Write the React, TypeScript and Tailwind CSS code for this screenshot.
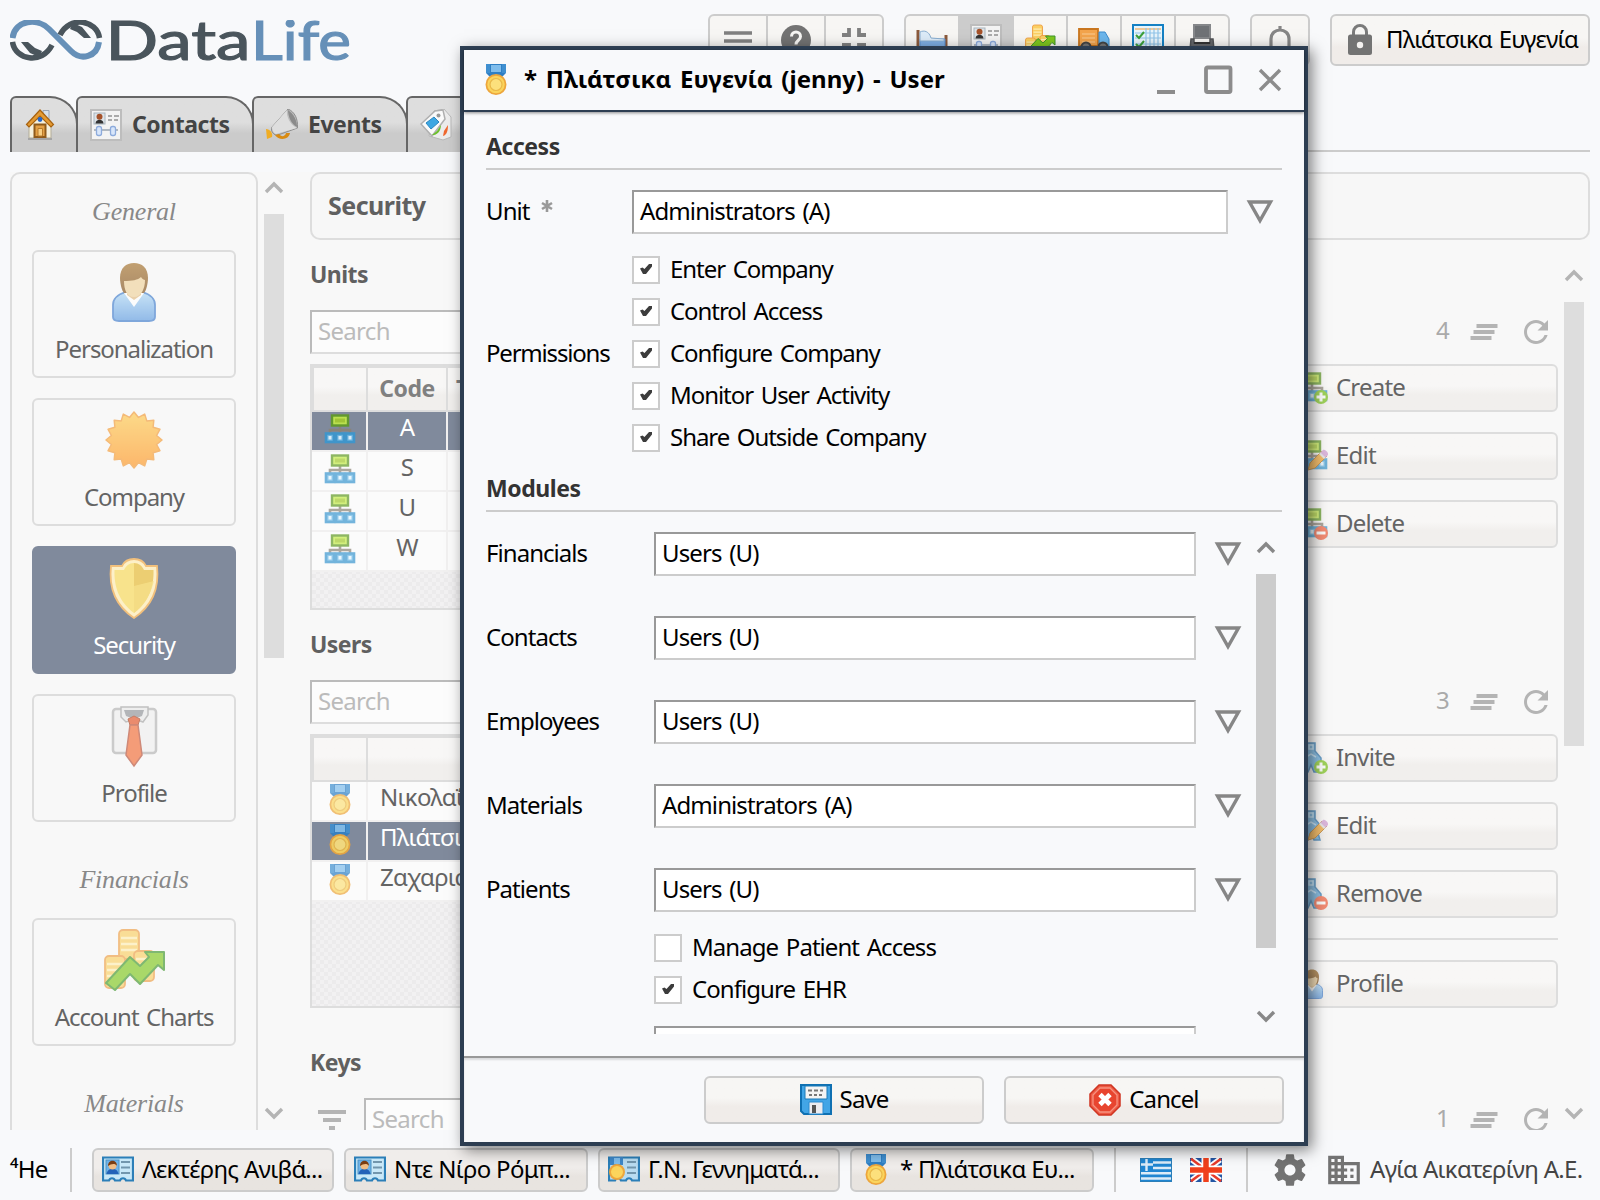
import React from "react";

type P = { className?: string };

const Svg = ({ className = "size-8", box = "0 0 32 32", children }: { className?: string; box?: string; children: React.ReactNode }) => (
  <svg viewBox={box} className={`shrink-0 ${className}`} fill="none">
    {children}
  </svg>
);

/* ---------- icons ---------- */
const Medal = ({ className }: P) => (
  <Svg className={className}>
    <path d="M6 0h20v9l-4 4H10l-4-4z" fill="#2f7fc4" />
    <path d="M11 1h10v7H11z" fill="#7fbdec" />
    <path d="M6 0h4v9H6zM22 0h4v9h-4z" fill="#3f8fd0" />
    <circle cx="16" cy="20.500" r="9.600" fill="#fbd45c" stroke="#eda63c" strokeWidth="1.800" />
    <circle cx="16" cy="20.500" r="6" fill="#fce07c" stroke="#e9b84a" strokeWidth="1.200" />
  </Svg>
);

const Org = ({ className, badge }: P & { badge?: "plus" | "minus" | "pencil" }) => (
  <Svg className={className}>
    <path d="M16 12v8M6 20v-4h20v4" stroke="#8c8478" strokeWidth="2.600" />
    <rect x="8" y="1.500" width="16" height="10" fill="#c2ea48" stroke="#5f9a24" strokeWidth="2.400" />
    <rect x="11" y="4.500" width="10" height="4" fill="#a4cc2c" />
    {[2, 12, 22].map((x) => (
      <g key={x}>
        <rect x={x} y="19.500" width="8" height="8.500" fill="#6cb9e6" stroke="#3a97cf" strokeWidth="2.600" />
        <rect x={x + 2.500} y="22" width="3" height="3.500" fill="#e4f6ff" />
      </g>
    ))}
    <Badge kind={badge} />
  </Svg>
);

const Badge = ({ kind }: { kind?: "plus" | "minus" | "pencil" }) => {
  if (kind === "plus")
    return (
      <g>
        <circle cx="25" cy="25" r="7" fill="#7cc41c" />
        <path d="M25 20.500v9M20.500 25h9" stroke="#fff" strokeWidth="3" />
      </g>
    );
  if (kind === "minus")
    return (
      <g>
        <circle cx="25" cy="25" r="7" fill="#f2603f" />
        <path d="M20.500 25h9" stroke="#fff" strokeWidth="3" />
      </g>
    );
  if (kind === "pencil")
    return (
      <g>
        <path d="M12 30l2-7L26 11l5 5-12 12z" fill="#f0a634" stroke="#b9761c" />
        <path d="M24 13l5 5 3-3c1-2-3-6-5-5z" fill="#cf9bd0" />
        <path d="M23 14l5 5 1.500-1.500-5-5z" fill="#ddd" />
      </g>
    );
  return null;
};

const UserBadge = ({ badge }: { badge: "plus" | "minus" | "pencil" }) => (
  <Svg>
    <path d="M11 1h8v8l6 7v5l-3 2 2 7h-6l-3-7-3 7H6l2-8-3-2v-5l6-6z" fill="#5fa8da" stroke="#2f79b3" strokeWidth="1.500" />
    <path d="M13 3h4v4h-4zM10 15l5-3 5 3" stroke="#b5dcf5" strokeWidth="1.500" />
    <Badge kind={badge} />
  </Svg>
);

const Person = ({ className }: P) => (
  <Svg className={className} box="0 0 64 64">
    <defs>
      <linearGradient id="shirt" x1="0" y1="0" x2="0" y2="1">
        <stop offset="0" stopColor="#aed8f6" />
        <stop offset="1" stopColor="#5c9ae0" />
      </linearGradient>
      <linearGradient id="hair" x1="0" y1="0" x2="0" y2="1">
        <stop offset="0" stopColor="#a5712a" />
        <stop offset="1" stopColor="#80501a" />
      </linearGradient>
    </defs>
    <path d="M11 57V45c0-8 6-11 13-13h16c7 2 13 5 13 13v12c0 3-3 4-6 4H17c-3 0-6-1-6-4z" fill="url(#shirt)" stroke="#3f7ccc" strokeWidth="1.800" />
    <path d="M22 33l10 14 10-14z" fill="#fff" />
    <path d="M25 28h14v7l-7 5-7-5z" fill="#e2bc82" />
    <path d="M18 18C18 8 24 3 32 3s14 5 14 15c0 6-2 13-4 15H22c-2-2-4-9-4-15z" fill="url(#hair)" />
    <path d="M22 21c8 0 14-1 17-4 1 2 3 3 4 3 0 9-4 17-11 17s-10-7-10-16z" fill="#f0d29c" />
  </Svg>
);

const burst = Array.from({ length: 32 }, (_, i) => {
  const a = (i * Math.PI) / 16;
  const r = i % 2 ? 23 : 28;
  return `${(32 + r * Math.sin(a)).toFixed(1)},${(32 - r * Math.cos(a)).toFixed(1)}`;
}).join(" ");

const Burst = ({ className }: P) => (
  <Svg className={className} box="0 0 64 64">
    <defs>
      <linearGradient id="sun" x1="0" y1="0" x2="0" y2="1">
        <stop offset="0" stopColor="#ffcb4f" />
        <stop offset="1" stopColor="#ff9420" />
      </linearGradient>
    </defs>
    <polygon points={burst} fill="url(#sun)" stroke="#f39a35" strokeWidth="1.500" strokeLinejoin="round" />
  </Svg>
);

const Shield = ({ className }: P) => (
  <Svg className={className} box="0 0 64 64">
    <path d="M32 3c6 0 10 3 12 7h11c2 18-2 38-23 52C11 48 7 28 9 10h11c2-4 6-7 12-7z" fill="#fdf0c8" stroke="#f2c07c" strokeWidth="1.800" />
    <path d="M32 7v50C16 45 12 29 12.500 14H22c2-4 5-7 10-7z" fill="#f8e38c" />
    <path d="M32 7v50c16-12 20-28 19.500-43H42c-2-4-5-7-10-7z" fill="#ecce72" />
    <path d="M52 25C48 40 42 50 32 57V30z" fill="#f8e38c" opacity=".7" />
  </Svg>
);

const Shirt = ({ className }: P) => (
  <Svg className={className} box="0 0 64 64">
    <rect x="11" y="5" width="43" height="44" rx="3" fill="#f0f0f0" stroke="#b4b4b4" strokeWidth="2.500" />
    <path d="M19 3h27v8l-5 7-8-3-9 3-5-5z" fill="#e9e9e9" stroke="#a4a4a4" strokeWidth="1.500" />
    <path d="M22 6h20l-2 6-8 3-8-3z" fill="#8f9297" />
    <path d="M26 15l6-3 6 3-2 6h-8z" fill="#e45223" stroke="#a83c18" />
    <path d="M28 21h8l4 30-8 11-8-11z" fill="#f26b35" stroke="#b84f35" strokeWidth="1.500" />
  </Svg>
);

const Charts = ({ className }: P) => (
  <Svg className={className} box="0 0 64 64">
    {[
      [17, 2, 29],
      [3, 28, 32],
      [32, 23, 30],
    ].map(([x, y, h]) => (
      <g key={x}>
        <rect x={x} y={y} width="20" height={h} rx="4" fill="#fbcf63" stroke="#ee9f45" strokeWidth="1.800" />
        <path d={`M${x + 2} ${y + 8}h16M${x + 2} ${y + 14}h16M${x + 2} ${y + 20}h16`} stroke="#ffeeb2" strokeWidth="2.500" />
      </g>
    ))}
    <path d="M4 55l24-26 10 9 9-9-4-5h19v18l-6-5-18 19-10-10-15 16z" fill="#7fc81e" stroke="#3f962c" strokeWidth="2" strokeLinejoin="round" />
  </Svg>
);

const Card = ({ className, gray }: P & { gray?: boolean }) => (
  <Svg className={className}>
    {gray ? (
      <>
        <rect x="1" y="1" width="30" height="30" fill="#f3f3f3" stroke="#bdbdbd" strokeWidth="2" />
        <rect x="4" y="4" width="11" height="11" fill="#dde3e8" stroke="#a9b5bd" />
        <path d="M5.500 14.500c0-5 8-5 8 0z" fill="#333" />
        <circle cx="9.500" cy="7.800" r="3" fill="#a5522a" />
        <path d="M18 7h4m2 0h5M18 11h4m2 0h4" stroke="#aaa" strokeWidth="1.800" />
        <path d="M4 21h24" stroke="#9aa4b0" strokeWidth="1.500" />
        <rect x="6.500" y="17.500" width="5" height="9" rx="2" fill="#d8e6fa" stroke="#8dabdc" strokeWidth="1.300" />
        <rect x="20.500" y="17.500" width="5" height="9" rx="2" fill="#d8e6fa" stroke="#8dabdc" strokeWidth="1.300" />
      </>
    ) : (
      <>
        <path d="M1 3.500h30v23h-7c-1-3-5-3-6 0h-5c-1-3-5-3-6 0H1z" fill="#c9e8f8" stroke="#2c7fb8" strokeWidth="2.200" />
        <rect x="4" y="6" width="13" height="14" fill="#6fb3e8" stroke="#4d92c4" />
        <path d="M4.500 20c1-7 11-7 12 0z" fill="#2362b8" />
        <circle cx="10.500" cy="11.500" r="4" fill="#f0bd84" />
        <path d="M6 12c0-7 9-7 9 0-2-3-6-2-9 0z" fill="#7a3d12" />
        <path d="M19 8h9M19 13.500h9M19 19h9" stroke="#7296ad" strokeWidth="2" />
      </>
    )}
  </Svg>
);

const MedalCard = () => (
  <Svg>
    <path d="M1 3.500h30v23h-7c-1-3-5-3-6 0h-5c-1-3-5-3-6 0H1z" fill="#b9dcf1" stroke="#2c7fb8" strokeWidth="2.200" />
    <path d="M2 3h13v8H2z" fill="#3d87c8" />
    <path d="M6 4h6v6H6z" fill="#7fbdec" />
    <path d="M19 8h9M19 13.500h9M19 19h9" stroke="#7296ad" strokeWidth="2" />
    <circle cx="9" cy="18" r="7" fill="#fbd45c" stroke="#eda63c" strokeWidth="2" />
  </Svg>
);

const House = () => (
  <Svg>
    <path d="M19 1.500h6v9h-6z" fill="#d7e0ea" stroke="#98a4b4" />
    <path d="M5 15L16 4l11 11v14H5z" fill="#f5f0dd" stroke="#b3ad99" />
    <path d="M2.500 15.500L16 1l13.500 14.500L27 18 16 7 5 18z" fill="#e39a34" stroke="#a8620f" strokeWidth="1.200" />
    <path d="M10.500 28V15.500h11V28z" fill="#e3a046" stroke="#8f5a1a" strokeWidth="2" />
    <path d="M14 27v-7.500h4.500V27z" fill="#f8cf83" stroke="#b87a2a" />
    <circle cx="16" cy="10.500" r="2.400" fill="#2565c8" />
    <path d="M4 30h24" stroke="#a5a5a5" strokeWidth="2" />
  </Svg>
);

const Horn = () => (
  <Svg>
    <path d="M22 0c7 3 10 10 9.500 19L12 26c-4 1-8-4-6-8z" fill="#bdbdbd" stroke="#8e8e8e" />
    <path d="M21 1c-1 6 3 15 10 18L10 25c-3-1-4-5-4-7z" fill="#dedede" />
    <path d="M22 1c6 4 9 11 9 17-6-3-9-11-9-17z" fill="#8b8b8b" />
    <path d="M0 20c4 0 7 4 6 8l-5 2z" fill="#f0ad24" />
    <path d="M9 26c4 6 14 5 15-2h-4c-1 4-5 4-7 1z" fill="#d98b12" />
  </Svg>
);

const Tags = () => (
  <Svg>
    <path d="M14 2l10-2 7 8v20l-8 3-14-4z" fill="#ececec" stroke="#b8b8b8" />
    <path d="M1 15L15 2l8-1 2 9-13 17z" fill="#fafafa" stroke="#b0b0b0" strokeWidth="1.500" />
    <circle cx="18.500" cy="6.500" r="2" fill="#999" />
    <path d="M6 14l8-6 5 5-8 7z" fill="#3ea7e2" stroke="#2c87c0" />
    <path d="M14 26c5-1 7-6 7-10l-4 6-5 4z" fill="#6cc02c" />
    <path d="M23 27c4-1 5-6 5-11l-4 6z" fill="#f0682f" />
  </Svg>
);

const Bed = () => (
  <Svg>
    <path d="M2 6v24M30 11v19" stroke="#8b5a3c" strokeWidth="3" />
    <path d="M4 15h25v8H4z" fill="#7fb0e6" stroke="#5a8fcf" />
    <path d="M4 8c4-2 9-1 11 6l13 1v2H4z" fill="#dcebf8" stroke="#8aaed0" />
    <path d="M4 23h25v3H4z" fill="#a66b47" />
  </Svg>
);

const Truck = () => (
  <Svg>
    <path d="M1 5h19v17H1z" fill="#f3a44c" stroke="#c9761e" strokeWidth="1.800" />
    <path d="M4 10h13M4 14h13M4 18h13" stroke="#f9cc93" />
    <path d="M21 8h6l4 7v8H21z" fill="#6cb6ec" stroke="#3b8acb" />
    <circle cx="8" cy="23" r="4.500" fill="#777" stroke="#444" strokeWidth="2" />
    <circle cx="25" cy="23" r="4.500" fill="#777" stroke="#444" strokeWidth="2" />
  </Svg>
);

const Planner = () => (
  <Svg>
    <rect x="1" y="1" width="30" height="30" fill="#e8f5fc" stroke="#1581c4" strokeWidth="2" />
    <path d="M3 5h26" stroke="#f0c48e" strokeWidth="1.800" />
    <path d="M14 4v26M18 4v26M22 4v26M26 4v26M3 9h26M3 14h26M3 20h26" stroke="#8fc4e8" strokeWidth="1.200" />
    <path d="M4 11l3 3 5-6M4 20l3 3 5-6" stroke="#3da03a" strokeWidth="2" />
  </Svg>
);

const Printer = () => (
  <Svg>
    <path d="M8 1h16v13H8z" fill="#6f7276" stroke="#85878a" strokeWidth="2" />
    <path d="M5 15h3v4h16v-4h3l1 11H4z" fill="#66686c" stroke="#515356" strokeWidth="1.500" />
    <path d="M8 19h16" stroke="#333" strokeWidth="2" />
  </Svg>
);

const Floppy = () => (
  <Svg>
    <path d="M1 1h30v29H4l-3-3z" fill="#42a5e6" stroke="#0f70b2" strokeWidth="2" />
    <path d="M5 2h22v13H5z" fill="#f4f4f4" stroke="#1b7ab8" />
    <path d="M8 6.500h4m2 0h4m2 0h3M9 11h3m2 0h3m2 0h3" stroke="#777" strokeWidth="2" />
    <path d="M9 18h14v12H9z" fill="#ececf0" stroke="#2b8bd0" />
    <path d="M12 21h4v8h-4z" fill="#555" />
  </Svg>
);

const Stop = () => (
  <Svg>
    <path d="M10 1h12l9 9v12l-9 9H10l-9-9V10z" fill="#ee5a44" stroke="#cf3522" strokeWidth="1.500" />
    <path d="M11 4h10l7 7v10l-7 7H11l-7-7V11z" fill="#e8452f" stroke="#f69280" strokeWidth="1.300" />
    <path d="M11 10.500l10 10M21 10.500l-10 10" stroke="#fff" strokeWidth="4.800" />
  </Svg>
);

const Greece = () => (
  <Svg box="0 0 32 28" className="h-7 w-8">
    <path d="M0 2h32v24H0z" fill="#1f86d2" />
    <path d="M12 6.500h20M12 12h20M0 17.300h32M0 22.500h32" stroke="#dcecf8" strokeWidth="2.400" />
    <path d="M0 2h13v13H0z" fill="#1f86d2" />
    <path d="M6.500 2v13M0 8.500h13" stroke="#dcecf8" strokeWidth="2.400" />
    <path d="M.5 2.500h31v23H.5z" stroke="#2d7fb8" />
  </Svg>
);

const Britain = () => (
  <Svg box="0 0 32 28" className="h-7 w-8">
    <path d="M0 2h32v24H0z" fill="#2356a4" />
    <g stroke="#fff" strokeWidth="6">
      <path d="M2 3.500l28 21M30 3.500l-28 21" />
    </g>
    <g stroke="#e63a2a" strokeWidth="2.500">
      <path d="M1 2.800l30 22.400M31 2.800l-30 22.400" />
    </g>
    <path d="M16 2v24M0 14h32" stroke="#fff" strokeWidth="9" />
    <path d="M16 2v24M0 14h32" stroke="#f0401c" strokeWidth="5.500" />
  </Svg>
);

const Gear = () => (
  <Svg className="size-[38px]" box="0 0 24 24">
    <path
      fill="#737373"
      d="M19.430 12.980c.04-.32.07-.64.07-.98s-.03-.66-.07-.98l2.110-1.650c.19-.15.24-.42.12-.64l-2-3.460c-.12-.22-.39-.3-.61-.22l-2.490 1c-.52-.4-1.080-.73-1.690-.98l-.38-2.650C14.460 2.180 14.250 2 14 2h-4c-.25 0-.46.18-.49.42l-.38 2.650c-.61.25-1.170.59-1.690.98l-2.490-1c-.23-.09-.49 0-.61.22l-2 3.460c-.13.22-.07.49.12.64l2.110 1.650c-.04.32-.07.65-.07.98s.03.66.07.98l-2.110 1.650c-.19.15-.24.42-.12.64l2 3.460c.12.22.39.3.61.22l2.490-1c.52.4 1.080.73 1.690.98l.38 2.650c.03.24.24.42.49.42h4c.25 0 .46-.18.49-.42l.38-2.650c.61-.25 1.170-.59 1.690-.98l2.490 1c.23.09.49 0 .61-.22l2-3.460c.12-.22.07-.49-.12-.64l-2.110-1.650zM12 15.500c-1.930 0-3.500-1.570-3.500-3.500s1.570-3.500 3.500-3.500 3.500 1.570 3.500 3.500-1.570 3.500-3.500 3.500z"
    />
  </Svg>
);

const Building = () => (
  <Svg className="size-[38px]" box="0 0 24 24">
    <path
      fill="#737373"
      d="M12 7V3H2v18h20V7H12zM6 19H4v-2h2v2zm0-4H4v-2h2v2zm0-4H4V9h2v2zm0-4H4V5h2v2zm4 12H8v-2h2v2zm0-4H8v-2h2v2zm0-4H8V9h2v2zm0-4H8V5h2v2zm10 12h-8v-2h2v-2h-2v-2h2v-2h-2V9h8v10zm-2-8h-2v2h2v-2zm0 4h-2v2h2v-2z"
    />
  </Svg>
);

const Padlock = () => (
  <Svg>
    <path d="M9.500 12V8a6.500 6.500 0 0113 0v4" stroke="#7a7a7a" strokeWidth="3" />
    <rect x="4" y="10.500" width="24" height="20.500" rx="2.500" fill="#737373" />
    <circle cx="16" cy="21" r="3.200" fill="#f4f2f0" />
  </Svg>
);

const Chevron = ({ down, dark, className }: P & { down?: boolean; dark?: boolean }) => (
  <Svg box="0 0 20 20" className={`size-5 ${className}`}>
    <path d={down ? "M2 6l8 8 8-8" : "M2 14l8-8 8 8"} stroke={dark ? "#888" : "#b4b4b4"} strokeWidth="3.400" />
  </Svg>
);

const Triangle = () => (
  <Svg box="0 0 28 26" className="h-[26px] w-7">
    <path d="M3.500 3h21L14 21.500z" stroke="#868686" strokeWidth="3.400" />
  </Svg>
);

const Lines = () => (
  <Svg box="0 0 28 20" className="h-5 w-7">
    <path d="M6.500 4h21M3.500 10h21M.5 16h21" stroke="#b4b4b4" strokeWidth="3.800" />
  </Svg>
);

const Refresh = () => (
  <Svg box="4 4 16 16" className="size-6">
    <path
      fill="#b4b4b4"
      d="M17.650 6.350C16.200 4.900 14.210 4 12 4c-4.420 0-7.990 3.580-7.990 8s3.570 8 7.990 8c3.730 0 6.840-2.550 7.730-6h-2.080c-.82 2.330-3.040 4-5.650 4-3.310 0-6-2.690-6-6s2.690-6 6-6c1.660 0 3.140.69 4.220 1.780L13 11h7V4l-2.350 2.350z"
    />
  </Svg>
);

/* ---------- pieces ---------- */
const Hand = () => (
  <>
    <path d="M2.500 22C5 40 32 45 42 25" fill="none" stroke="#4a555c" strokeWidth="5.500" />
    <path d="M11 22h7l7 6 7 3-3 6-9-4z" fill="#4a555c" />
  </>
);

const Logo = () => (
  <svg viewBox="0 0 340 44" className="h-11 w-[340px]">
    <path d="M2.500 18C5-1 28-2 39 9l22 22c10 10 26 6 28-9" fill="none" stroke="#6690b8" strokeWidth="6" />
    <Hand />
    <g transform="rotate(180 46 20)">
      <Hand />
    </g>
    <g fontFamily="Lato" fontSize="55" strokeWidth="1.200" letterSpacing="0" wordSpacing="0">
      <text x="95.500" y="39.500" textLength="145" lengthAdjust="spacingAndGlyphs" fill="#4a555c" stroke="#4a555c">
        Data
      </text>
      <text x="241" y="39.500" textLength="100" lengthAdjust="spacingAndGlyphs" fill="#6690b8" stroke="#6690b8">
        Life
      </text>
    </g>
  </svg>
);

const Tab = ({ icon, label, className = "" }: { icon: React.ReactNode; label?: string; className?: string }) => (
  <div
    className={`-mr-0.5 flex h-14 shrink-0 items-center gap-2.5 rounded-tl-md rounded-tr-[28px] border-2 border-b-0 border-[#666] bg-linear-to-b from-[#dedede] from-45% to-[#cbcbcb] to-65% pl-3 ${className}`}
  >
    {icon}
    {label && <span className="pb-0.5 text-[23px] font-bold tracking-[-0.45px] text-[#444]">{label}</span>}
  </div>
);

const ToolCell = ({ children, className = "" }: { children: React.ReactNode; className?: string }) => (
  <div className={`flex items-start justify-center border-r-2 border-[#ccc] pt-2 last:border-r-0 ${className}`}>{children}</div>
);

const SideTitle = ({ children }: { children: string }) => (
  <div className="flex h-9 shrink-0 items-center justify-center font-['Liberation_Serif'] text-[26px] tracking-[-0.2px] text-[#888] italic">
    {children}
  </div>
);

const SideButton = ({ icon, label, active }: { icon: React.ReactNode; label: string; active?: boolean }) => (
  <div
    className={`mx-5 flex h-32 shrink-0 flex-col items-center rounded-md border-2 pt-2 ${
      active ? "border-[#808a9c] bg-[#808a9c] text-white" : "border-[#ddd] text-[#646464]"
    }`}
  >
    <div className={active ? "" : "opacity-65"}>{icon}</div>
    <div className="mt-[9px] leading-8">{label}</div>
  </div>
);

const Field = ({ value, className = "" }: { value: string; className?: string }) => (
  <div
    className={`flex h-11 shrink-0 items-center border-2 border-t-[#999] border-r-[#ccc] border-b-[#ccc] border-l-[#999] bg-white pb-0.5 pl-1.5 tracking-[-0.9px] ${className}`}
  >
    {value}
  </div>
);

const SearchField = ({ className = "" }: P) => (
  <div
    className={`flex h-11 items-center border-2 border-t-[#bbb] border-r-[#ddd] border-b-[#ddd] border-l-[#bbb] bg-[#fcfcfc] pb-0.5 pl-1.5 tracking-[-0.7px] text-[#bbb] ${className}`}
  >
    Search
  </div>
);

const Check = ({ label, checked = true }: { label: string; checked?: boolean }) => (
  <div className="flex h-7 items-center gap-2.5">
    <div className="flex size-7 items-center justify-center border-2 border-[#ccc] bg-white pb-0.5">
      {checked && (
        <Svg box="0 0 12 10" className="h-2.5 w-3">
          <path d="M0 4.500l2.500-1L4.500 5 9 0h3v2.500L6 10H3z" fill="#3c3c3c" />
        </Svg>
      )}
    </div>
    <span className="pb-0.5">{label}</span>
  </div>
);

const GroupTitle = ({ children }: { children: string }) => (
  <div className="mr-[22px] h-9 shrink-0 border-b-2 border-[#ccc] text-[23px] leading-6 font-bold tracking-[-0.45px] text-[#333]">{children}</div>
);

const ActionButton = ({ icon, label }: { icon: React.ReactNode; label: string }) => (
  <div className="flex h-12 shrink-0 items-center gap-2 rounded-md border-2 border-[#ddd] bg-linear-to-b from-[#f8f7f6] from-45% to-[#f1efed] to-65% pl-2 tracking-[-0.8px]">
    <div className="opacity-70">{icon}</div>
    <span className="pb-0.5">{label}</span>
  </div>
);

const Counter = ({ n }: { n: string }) => (
  <div className="mr-2.5 flex h-11 items-center justify-end text-[#aaa]">
    <span className="mr-[21px] pb-1">{n}</span>
    <Lines />
    <div className="ml-[26px]">
      <Refresh />
    </div>
  </div>
);

const Row = ({ icon, text, active, cols }: { icon: React.ReactNode; text: string; active?: boolean; cols: boolean }) => (
  <div className={`flex h-10 gap-0.5 border-b-2 border-[#f1f0f0] tracking-[-0.7px] ${active ? "text-white" : ""}`}>
    <div className={`flex w-[54px] items-start justify-center pt-0.5 pl-0.5 ${active ? "bg-[#808a9c]" : "bg-[#fbfbfb]"}`}>
      <div className={active ? "opacity-90" : "opacity-70"}>{icon}</div>
    </div>
    <div className={`leading-[30px] whitespace-nowrap ${cols ? "w-[78px] text-center" : "flex-1 pl-3"} ${active ? "bg-[#808a9c]" : "bg-[#fbfbfb]"}`}>
      {text}
    </div>
    {cols && <div className={`flex-1 ${active ? "bg-[#808a9c]" : "bg-[#fbfbfb]"}`} />}
  </div>
);

const Grid = ({ className, children, head }: { className: string; children: React.ReactNode; head: React.ReactNode }) => (
  <div
    className={`flex w-[900px] flex-col border-2 border-[#ddd] bg-[repeating-conic-gradient(#f2f1f2_0_25%,#ecebec_0_50%)] bg-[length:8px_8px] ${className}`}
  >
    <div className="flex h-[46px] shrink-0 gap-0.5 border-2 border-r-0 border-[#ddd] bg-[#ddd] text-[23px] font-bold tracking-[-0.5px] text-[#808080]">
      {head}
    </div>
    <div className="bg-[#f1f0f0]">{children}</div>
  </div>
);

const headCell = "flex items-center justify-center bg-linear-to-b from-[#f8f7f6] from-45% to-[#f1efed] to-65% pb-0.5";

const Heading = ({ children, className = "" }: { children: string; className?: string }) => (
  <div className={`text-[23px] leading-8 font-bold tracking-[-0.55px] text-[#606060] ${className}`}>{children}</div>
);

const Task = ({ icon, label, className }: { icon: React.ReactNode; label: string; className: string }) => (
  <div
    className={`flex h-11 shrink-0 items-center gap-2 rounded-md border-2 border-[#ccc] bg-linear-to-b from-[#f0edeb] from-45% to-[#e8e4e0] to-65% pl-2 whitespace-nowrap ${className}`}
  >
    {icon}
    <span className="pb-0.5">{label}</span>
  </div>
);

const ModuleRow = ({ label, value }: { label: string; value: string }) => (
  <div className="mb-10 flex h-11 items-center">
    <div className="w-[168px] pb-0.5">{label}</div>
    <Field value={value} className="w-[542px]" />
    <div className="ml-[18px]">
      <Triangle />
    </div>
  </div>
);

const dialogButton =
  "flex h-12 w-[280px] items-center justify-center gap-2 rounded-md border-2 border-[#ccc] bg-linear-to-b from-[#f7f6f4] from-45% to-[#f0ece9] to-65%";

const Dialog = () => (
  <div className="absolute top-[46px] left-[460px] flex h-[1100px] w-[848px] flex-col border-4 border-[#2d3e52] bg-[#f8f9fb] shadow-[4px_4px_14px_rgba(0,0,0,0.5)]">
    <div className="flex h-[62px] shrink-0 items-center border-b-2 border-[#2d3e52] pl-4 shadow-[0_1px_3px_rgba(0,0,0,0.45)]">
      <Medal />
      <span className="ml-3 flex-1 pb-0.5 text-[24px] font-bold tracking-[0.05px] [word-spacing:2.4px] whitespace-nowrap">
        * Πλιάτσικα Ευγενία (jenny) - User
      </span>
      <svg viewBox="0 0 128 32" className="mr-5 h-8 w-32" fill="none" stroke="#8c8c8c">
        <path d="M1 28h18" strokeWidth="4" />
        <rect x="50" y="3.500" width="24.500" height="24.500" rx="1.500" strokeWidth="3.800" />
        <path d="M104 6l20 20M124 6l-20 20" strokeWidth="3.400" />
      </svg>
    </div>
    <div className="flex h-[922px] flex-col overflow-hidden pt-[22px] pl-[22px] tracking-[-1.05px] [word-spacing:2.4px]">
      <GroupTitle>Access</GroupTitle>
      <div className="mt-5 flex h-11 shrink-0 items-center">
        <div className="flex w-[146px] gap-2.5 pb-0.5 tracking-[-0.9px]">
          Unit
          <Svg box="0 0 14 14" className="mt-1 size-3.5">
            <path d="M7 1v12M2 4l10 6M12 4L2 10" stroke="#999" strokeWidth="2.600" />
          </Svg>
        </div>
        <Field value="Administrators (A)" className="w-[596px]" />
        <div className="ml-[18px]">
          <Triangle />
        </div>
      </div>
      <div className="mt-[22px] flex shrink-0 items-center">
        <div className="w-[146px] pb-0.5 tracking-[-1.2px]">Permissions</div>
        <div className="flex flex-col gap-3.5">
          <Check label="Enter Company" />
          <Check label="Control Access" />
          <Check label="Configure Company" />
          <Check label="Monitor User Activity" />
          <Check label="Share Outside Company" />
        </div>
      </div>
      <div className="mt-6 flex shrink-0 flex-col">
        <GroupTitle>Modules</GroupTitle>
      </div>
      <div className="mt-5 flex h-[502px] shrink-0 overflow-hidden tracking-[-0.95px]">
        <div className="w-[770px] shrink-0">
          <ModuleRow label="Financials" value="Users (U)" />
          <ModuleRow label="Contacts" value="Users (U)" />
          <ModuleRow label="Employees" value="Users (U)" />
          <ModuleRow label="Materials" value="Administrators (A)" />
          <ModuleRow label="Patients" value="Users (U)" />
          <div className="-mt-[18px] ml-[168px] flex flex-col gap-3.5">
            <Check label="Manage Patient Access" checked={false} />
            <Check label="Configure EHR" />
            <Field value="" className="mt-2 w-[542px]" />
          </div>
        </div>
        <div className="flex w-5 flex-col items-center">
          <Chevron dark className="mt-[6px]" />
          <div className="mt-4 h-[374px] w-5 bg-[#ccc]" />
          <Chevron dark down className="mt-[58px]" />
        </div>
      </div>
    </div>
    <div className="mt-[22px] flex flex-1 items-start gap-5 border-t-2 border-[#999] pt-[18px] pl-60 tracking-[-0.9px] shadow-[inset_0_2px_2px_rgba(0,0,0,0.12)]">
      <div className={dialogButton}>
        <Floppy />
        <span className="pb-0.5">Save</span>
      </div>
      <div className={dialogButton}>
        <Stop />
        <span className="pb-0.5">Cancel</span>
      </div>
    </div>
  </div>
);

export default function App() {
  return (
    <div className="relative flex h-[1200px] w-[1600px] flex-col overflow-hidden bg-[#f8f9fb] font-['Noto_Sans',sans-serif] text-[24px] leading-8 tracking-[-0.7px] text-black">
      <header className="flex h-24 shrink-0 items-start px-2.5 pt-3.5">
        <div className="mt-1.5 w-[698px]">
          <Logo />
        </div>
        <div className="flex h-[52px] w-44 rounded-md border-2 border-[#ccc] bg-[#f7f6f4]">
          <ToolCell className="w-[58px]">
            <Svg>
              <path d="M2 9h28M2 17h28M2 25h28" stroke="#808080" strokeWidth="3.500" />
            </Svg>
          </ToolCell>
          <ToolCell className="w-[58px]">
            <Svg>
              <circle cx="16" cy="16" r="15" fill="#737373" />
              <path d="M11.500 12.500c0-6 9-6 9 0 0 4-4.500 3.500-4.500 8M16 22.500v4" stroke="#f7f6f4" strokeWidth="3" />
            </Svg>
          </ToolCell>
          <ToolCell className="w-14">
            <Svg>
              <path d="M4 11h7V4M28 11h-7V4M4 21h7v7M28 21h-7v7" stroke="#808080" strokeWidth="3.800" />
            </Svg>
          </ToolCell>
        </div>
        <div className="ml-5 flex h-[52px] w-[326px] rounded-md border-2 border-[#ccc] bg-[#f7f6f4]">
          <ToolCell className="w-[54px]"><Bed /></ToolCell>
          <ToolCell className="w-[54px] bg-[#ccc]"><Card gray /></ToolCell>
          <ToolCell className="w-[54px]"><Charts className="size-8" /></ToolCell>
          <ToolCell className="w-[54px]"><Truck /></ToolCell>
          <ToolCell className="w-[54px]"><Planner /></ToolCell>
          <ToolCell className="w-[52px]"><Printer /></ToolCell>
        </div>
        <div className="ml-5 flex h-[52px] w-[60px] justify-center rounded-md border-2 border-[#ccc] bg-[#f7f6f4] pt-2">
          <Svg>
            <path d="M16 2v4M7 26V15c0-12 18-12 18 0v11z" stroke="#868686" strokeWidth="3.200" />
          </Svg>
        </div>
        <div className="ml-5 flex h-[52px] w-[260px] items-center gap-2.5 rounded-md border-2 border-[#ccc] bg-linear-to-b from-[#f7f6f4] from-45% to-[#f0ece9] to-65% pl-3">
          <Padlock />
          <span className="pb-0.5 tracking-[-0.9px] [word-spacing:1.5px] whitespace-nowrap">Πλιάτσικα Ευγενία</span>
        </div>
      </header>

      <nav className="mx-2.5 flex h-14 shrink-0 border-b-2 border-[#ccc]">
        <div className="flex h-14 w-[544px] shrink-0 border-b-2 border-[#2c4060]">
          <Tab icon={<House />} className="w-[68px]" />
          <Tab icon={<Card gray />} label="Contacts" className="w-[178px]" />
          <Tab icon={<Horn />} label="Events" className="w-[156px]" />
          <Tab icon={<Tags />} className="w-[150px]" />
        </div>
      </nav>

      <main className="mx-2.5 mt-5 flex h-[958px] shrink-0 overflow-hidden bg-[#f8f8f8] text-[#646464]">
        <aside className="flex h-[1000px] w-[248px] shrink-0 flex-col gap-5 rounded-[10px] border-2 border-[#ddd] pt-5 tracking-[-1.05px] [word-spacing:2.4px]">
          <SideTitle>General</SideTitle>
          <SideButton icon={<Person className="size-16" />} label="Personalization" />
          <SideButton icon={<Burst className="size-16" />} label="Company" />
          <SideButton icon={<Shield className="size-16" />} label="Security" active />
          <SideButton icon={<Shirt className="size-16" />} label="Profile" />
          <div className="mt-5 flex flex-col gap-5">
            <SideTitle>Financials</SideTitle>
            <SideButton icon={<Charts className="size-16" />} label="Account Charts" />
          </div>
          <div className="mt-5">
            <SideTitle>Materials</SideTitle>
          </div>
        </aside>
        <div className="ml-1.5 flex w-5 shrink-0 flex-col">
          <Chevron className="mt-[6px]" />
          <div className="mt-4 h-[444px] bg-[#ddd]" />
          <Chevron down className="mt-auto mb-[7px]" />
        </div>
        <div className="ml-[26px] flex w-[1280px] shrink-0 flex-col">
          <div className="flex h-[68px] shrink-0 items-center rounded-[10px] border-2 border-[#ddd] bg-[#f7f7f7] pb-0.5 pl-4 text-[25px] font-bold tracking-[-0.5px] text-[#606060]">
            Security
          </div>
          <div className="flex h-[890px]">
            <div className="flex w-[976px] shrink-0 flex-col">
              <Heading className="mt-[18px]">Units</Heading>
              <SearchField className="mt-5 shrink-0" />
              <Grid
                className="mt-2.5 h-[246px] shrink-0"
                head={
                  <>
                    <div className={`${headCell} w-[52px]`} />
                    <div className={`${headCell} w-[78px]`}>Code</div>
                    <div className={`${headCell} flex-1 justify-start pl-2`}>Title</div>
                  </>
                }
              >
                <Row cols icon={<Org />} text="A" active />
                <Row cols icon={<Org />} text="S" />
                <Row cols icon={<Org />} text="U" />
                <Row cols icon={<Org />} text="W" />
              </Grid>
              <Heading className="mt-[18px]">Users</Heading>
              <SearchField className="mt-5 shrink-0" />
              <Grid
                className="mt-2.5 h-[274px] shrink-0"
                head={
                  <>
                    <div className={`${headCell} w-[52px]`} />
                    <div className={`${headCell} flex-1`} />
                  </>
                }
              >
                <Row cols={false} icon={<Medal />} text="Νικολαΐδης" />
                <Row cols={false} icon={<Medal />} text="Πλιάτσικα Ευγενία" active />
                <Row cols={false} icon={<Medal />} text="Ζαχαριάδης" />
              </Grid>
              <Heading className="mt-[38px]">Keys</Heading>
              <div className="mt-5 flex shrink-0 items-center">
                <Svg box="0 0 28 20" className="mx-2 h-5 w-7">
                  <path d="M0 2h28M5 10h18M11 18h6" stroke="#b4b4b4" strokeWidth="3.800" />
                </Svg>
                <SearchField className="ml-2.5 w-[600px]" />
              </div>
            </div>
            <div className="flex w-[272px] shrink-0 flex-col">
              <div className="mt-[70px]">
                <Counter n="4" />
              </div>
              <div className="mt-2.5 flex flex-col gap-5">
                <ActionButton icon={<Org badge="plus" />} label="Create" />
                <ActionButton icon={<Org badge="pencil" />} label="Edit" />
                <ActionButton icon={<Org badge="minus" />} label="Delete" />
              </div>
              <div className="mt-[132px]">
                <Counter n="3" />
              </div>
              <div className="mt-2.5 flex flex-col gap-5">
                <ActionButton icon={<UserBadge badge="plus" />} label="Invite" />
                <ActionButton icon={<UserBadge badge="pencil" />} label="Edit" />
                <ActionButton icon={<UserBadge badge="minus" />} label="Remove" />
                <div className="h-0.5 bg-[#ddd]" />
                <ActionButton icon={<Person />} label="Profile" />
              </div>
              <div className="mt-[90px]">
                <Counter n="1" />
              </div>
            </div>
            <div className="ml-1.5 flex w-5 flex-col">
              <Chevron className="mt-[26px]" />
              <div className="mt-4 h-[444px] bg-[#ddd]" />
              <Chevron down className="mt-auto mb-[7px]" />
            </div>
          </div>
        </div>
      </main>

      <footer className="mt-[18px] flex h-11 shrink-0 items-center pl-2.5 whitespace-nowrap">
        <div className="h-11 w-[62px] border-r-2 border-[#ccc] leading-[42px]">⁴He</div>
        <div className="ml-5 flex gap-2.5">
          <Task icon={<Card />} label="Λεκτέρης Ανιβά..." className="w-[242px]" />
          <Task icon={<Card />} label="Ντε Νίρο Ρόμπ..." className="w-[244px]" />
          <Task icon={<MedalCard />} label="Γ.Ν. Γεννηματά..." className="w-[242px]" />
          <Task icon={<Medal />} label="* Πλιάτσικα Ευ..." className="w-[244px]" />
        </div>
        <div className="ml-5 flex h-11 w-[134px] items-center gap-[18px] border-x-2 border-[#ccc] pl-6">
          <Greece />
          <Britain />
        </div>
        <div className="ml-[23px] flex items-center text-[#444]">
          <Gear />
          <div className="ml-4">
            <Building />
          </div>
          <span className="ml-[7px] pb-0.5">Αγία Αικατερίνη Α.Ε.</span>
        </div>
      </footer>

      <Dialog />
    </div>
  );
}
